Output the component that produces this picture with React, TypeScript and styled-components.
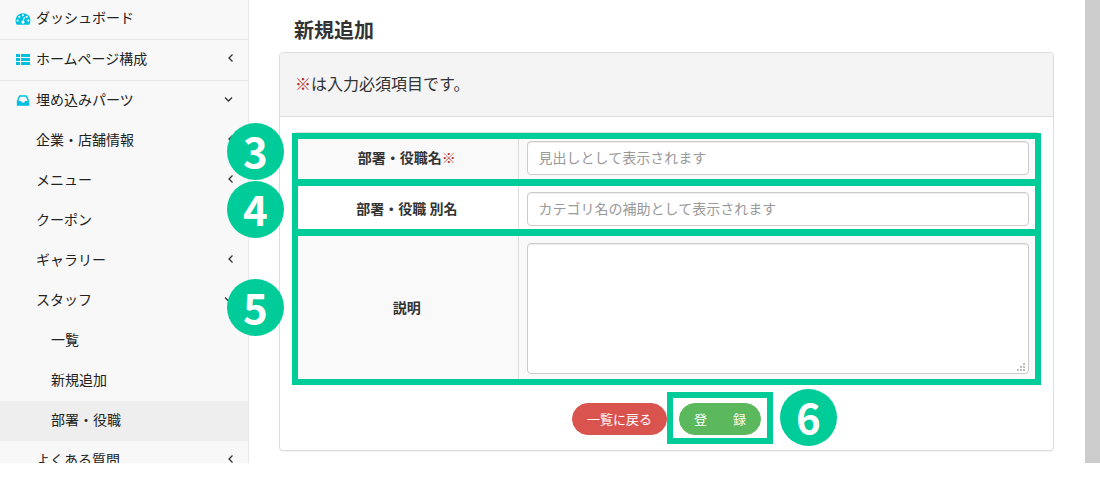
import React from "react";
import styled, { createGlobalStyle } from "styled-components";

const ACCENT = "#00cc99";
const LINE = "#dddddd";

const GlobalStyle = createGlobalStyle`
  *, *::before, *::after { box-sizing: border-box; }
  body {
    margin: 0;
    background: #fff;
    color: #333;
    font-family: "Noto Sans CJK JP", sans-serif;
    font-size: 14px;
    line-height: 20px;
  }
`;

const Shell = styled.div`
  display: flex;
  align-items: stretch;
  height: calc(100vh - 36px);
  overflow: hidden;
`;

const Sidebar = styled.nav`
  flex: 0 0 249px;
  background: #f8f8f8;
  border-right: 1px solid #e7e7e7;
`;

const NavList = styled.ul`
  list-style: none;
  margin: 0;
  padding: 0;
`;

const NavItem = styled.li<{ $divided?: boolean }>`
  border-bottom: ${(p) => (p.$divided ? "1px solid #e7e7e7" : "0")};
  &:first-child { margin-top: -1px; }
`;

const NavLink = styled.a<{ $level: number; $active?: boolean }>`
  display: flex;
  align-items: center;
  gap: 5px;
  height: 40px;
  padding: 0 14px 4px ${(p) => [15, 36, 51][p.$level]}px;
  background: ${(p) => (p.$active ? "#eeeeee" : "transparent")};
  color: #222;
  text-decoration: none;
  white-space: nowrap;
`;

const NavIcon = styled.svg`
  flex: none;
  width: 16px;
  height: 16px;
  margin-top: 4px;
  fill: #00c0e0;
`;

const Chevron = styled.svg`
  flex: none;
  width: 10px;
  height: 10px;
  margin-left: auto;
  fill: none;
  stroke: #333;
  stroke-width: 1.3;
`;

const Main = styled.main`
  position: relative;
  flex: 1;
  min-width: 0;
  padding: 20px 31px 0 30px;
`;

const Title = styled.h1`
  margin: 0 0 12px;
  padding-left: 15px;
  font-size: 20px;
  line-height: 20px;
`;

const Panel = styled.section`
  border: 1px solid ${LINE};
  border-radius: 4px;
  background: #fff;
  box-shadow: 0 1px 1px rgba(0, 0, 0, 0.05);
`;

const PanelHeader = styled.p`
  margin: 0;
  padding: 18px 15px 21px;
  border-bottom: 1px solid ${LINE};
  border-radius: 3px 3px 0 0;
  background: #f4f4f4;
  font-size: 16px;
  line-height: 24px;
`;

const Required = styled.span`
  color: #b52b27;
  font-weight: 400;
`;

const Form = styled.form`
  padding: 15px;
`;

const FieldTable = styled.table`
  width: 100%;
  margin-bottom: 20px;
  border-spacing: 0;
  table-layout: fixed;
  border: solid ${LINE};
  border-width: 0 1px 1px 0;
`;

const FieldRow = styled.tr`
  position: relative;
  &:nth-child(odd) { background: #f9f9f9; }
`;

const LabelCell = styled.th`
  width: 30%;
  padding: 6px 8px 9px;
  border: solid ${LINE};
  border-width: 1px 0 0 1px;
  font-weight: 700;
`;

const InputCell = styled.td`
  padding: 8px;
  border: solid ${LINE};
  border-width: 1px 0 0 1px;
`;

const TextBox = styled.input`
  display: block;
  width: 100%;
  height: 34px;
  padding: 5px 11px 7px;
  border: 1px solid #ccc;
  border-radius: 4px;
  background: #fff;
  box-shadow: inset 0 1px 1px rgba(0, 0, 0, 0.075);
  color: #555;
  font: inherit;
  &::placeholder { color: #999; opacity: 1; }
`;

const AreaWrap = styled.div`
  position: relative;
`;

const TextArea = styled(TextBox).attrs({ as: "textarea" })`
  height: 131px;
  resize: none;
`;

const Grip = styled.svg`
  position: absolute;
  right: 4px;
  bottom: 3px;
  width: 8px;
  height: 8px;
  fill: #bbb;
  pointer-events: none;
`;

const Highlight = styled.span<{ $top: number; $bottom: number; $left: number; $right: number }>`
  position: absolute;
  top: ${(p) => p.$top}px;
  bottom: ${(p) => p.$bottom}px;
  left: ${(p) => p.$left}px;
  right: ${(p) => p.$right}px;
  border: 6px solid ${ACCENT};
  pointer-events: none;
`;

const Badge = styled.span<{ $left: number; $top: number }>`
  position: absolute;
  z-index: 1;
  left: ${(p) => p.$left}px;
  top: ${(p) => p.$top}px;
  width: 57px;
  height: 57px;
  border-radius: 50%;
  background: ${ACCENT};
  color: #fff;
  font-size: 42px;
  font-weight: 700;
  line-height: 53px;
  text-align: center;
`;

const Actions = styled.div`
  display: flex;
  justify-content: center;
  gap: 12px;
`;

const Marked = styled.div`
  position: relative;
`;

const PillButton = styled.button<{ $tone: "danger" | "success" }>`
  display: block;
  height: 32px;
  padding: 0 14px;
  border: 1px solid ${(p) => (p.$tone === "danger" ? "#d9534f" : "#5cb85c")};
  border-radius: 16px;
  background: ${(p) => (p.$tone === "danger" ? "#d9534f" : "#5cb85c")};
  color: #fff;
  font: inherit;
  font-size: 13px;
  white-space: nowrap;
`;

const ScrollTrack = styled.div`
  flex: 0 0 15px;
  background: #ccc;
`;

type IconName = "gauge" | "list" | "inbox";

const iconBoxes: Record<IconName, string> = {
  gauge: "-64 0 1920 1920",
  list: "0 0 16 16",
  inbox: "-224 -32 1984 1984",
};

const Icon = ({ name }: { name: IconName }) => (
  <NavIcon viewBox={iconBoxes[name]} aria-hidden="true">
    {name === "gauge" && (
      <path d="M384 1152q0-53-37.500-90.500t-90.500-37.500-90.500 37.500-37.500 90.500 37.500 90.500 90.500 37.500 90.500-37.500 37.500-90.500zm192-448q0-53-37.500-90.500t-90.500-37.500-90.500 37.500-37.500 90.500 37.500 90.500 90.500 37.500 90.500-37.500 37.500-90.500zm428 481l101-382q6-26-7.500-48.500t-38.500-29.500-48 6.500-30 39.500l-101 382q-60 5-107 43.500t-63 98.500q-20 77 20 146t117 89 146-20 89-117q16-60-6-117t-72-91zm660-33q0-53-37.500-90.500t-90.500-37.500-90.500 37.500-37.500 90.500 37.500 90.500 90.500 37.500 90.500-37.500 37.500-90.500zm-640-640q0-53-37.500-90.500t-90.500-37.500-90.500 37.500-37.500 90.500 37.500 90.500 90.500 37.500 90.500-37.500 37.500-90.500zm448 192q0-53-37.500-90.500t-90.500-37.500-90.500 37.500-37.500 90.500 37.500 90.500 90.500 37.500 90.500-37.500 37.500-90.500zm320 448q0 261-141 483-19 29-54 29h-1402q-35 0-54-29-141-221-141-483 0-182 71-348t191-286 286-191 348-71 348 71 286 191 191 286 71 348z" />
    )}
    {name === "list" && (
      <path d="M1 2h4v3H1zM6 2h9v3H6zM1 6h4v3H1zM6 6h9v3H6zM1 10h4v3H1zM6 10h9v3H6z" />
    )}
    {name === "inbox" && (
      <path d="M1023 960h316q-1-3-2.500-8t-2.500-8l-212-496h-708l-212 496q-1 2-2.500 8t-2.500 8h316l95 192h320zm513 30v482q0 26-19 45t-45 19h-1408q-26 0-45-19t-19-45v-482q0-62 25-123l238-552q10-25 36.500-42t52.500-17h832q26 0 52.500 17t36.500 42l238 552q25 61 25 123z" />
    )}
  </NavIcon>
);

interface Entry {
  text: string;
  level: number;
  icon?: IconName;
  chevron?: "left" | "down";
  divided?: boolean;
  active?: boolean;
}

const entries: Entry[] = [
  { text: "ダッシュボード", level: 0, icon: "gauge", divided: true },
  { text: "ホームページ構成", level: 0, icon: "list", chevron: "left", divided: true },
  { text: "埋め込みパーツ", level: 0, icon: "inbox", chevron: "down" },
  { text: "企業・店舗情報", level: 1, chevron: "left" },
  { text: "メニュー", level: 1, chevron: "left" },
  { text: "クーポン", level: 1 },
  { text: "ギャラリー", level: 1, chevron: "left" },
  { text: "スタッフ", level: 1, chevron: "down" },
  { text: "一覧", level: 2 },
  { text: "新規追加", level: 2 },
  { text: "部署・役職", level: 2, active: true },
  { text: "よくある質問", level: 1, chevron: "left" },
];

export default function App() {
  return (
    <>
      <GlobalStyle />
      <Shell>
        <Sidebar>
          <NavList>
            {entries.map((e) => (
              <NavItem key={e.text} $divided={e.divided}>
                <NavLink
                  href="#"
                  $level={e.level}
                  $active={e.active}
                  aria-current={e.active ? "page" : undefined}
                >
                  {e.icon && <Icon name={e.icon} />}
                  {e.text}
                  {e.chevron && (
                    <Chevron viewBox="0 0 10 10" aria-hidden="true">
                      <path d={e.chevron === "left" ? "M8.500 1.500L5 5L8.500 8.500" : "M1 3.500L4.500 7L8 3.500"} />
                    </Chevron>
                  )}
                </NavLink>
              </NavItem>
            ))}
          </NavList>
        </Sidebar>
        <Main>
          <Title>新規追加</Title>
          <Panel>
            <PanelHeader>
              <Required>※</Required>は入力必須項目です。
            </PanelHeader>
            <Form onSubmit={(e) => e.preventDefault()}>
              <FieldTable>
                <tbody>
                  <FieldRow>
                    <LabelCell scope="row">
                      <label htmlFor="name">
                        部署・役職名<Required>※</Required>
                      </label>
                      <Highlight $top={1} $bottom={-2} $left={-3} $right={-4} />
                      <Badge $left={-68} $top={-9}>3</Badge>
                    </LabelCell>
                    <InputCell>
                      <TextBox id="name" type="text" placeholder="見出しとして表示されます" />
                    </InputCell>
                  </FieldRow>
                  <FieldRow>
                    <LabelCell scope="row">
                      <label htmlFor="alias">部署・役職 別名</label>
                      <Highlight $top={-3} $bottom={-1} $left={-3} $right={-4} />
                      <Badge $left={-68} $top={-2}>4</Badge>
                    </LabelCell>
                    <InputCell>
                      <TextBox id="alias" type="text" placeholder="カテゴリ名の補助として表示されます" />
                    </InputCell>
                  </FieldRow>
                  <FieldRow>
                    <LabelCell scope="row">
                      <label htmlFor="description">説明</label>
                      <Highlight $top={-4} $bottom={-3} $left={-3} $right={-4} />
                      <Badge $left={-68} $top={45}>5</Badge>
                    </LabelCell>
                    <InputCell>
                      <AreaWrap>
                        <TextArea id="description" />
                        <Grip viewBox="0 0 8 8" aria-hidden="true">
                          <path d="M6 0h2v2H6zM3 3h2v2H3zM6 3h2v2H6zM0 6h2v2H0zM3 6h2v2H3zM6 6h2v2H6z" />
                        </Grip>
                      </AreaWrap>
                    </InputCell>
                  </FieldRow>
                </tbody>
              </FieldTable>
              <Actions>
                <PillButton type="button" $tone="danger">一覧に戻る</PillButton>
                <Marked>
                  <PillButton type="submit" $tone="success">登　　録</PillButton>
                  <Highlight $top={-11} $bottom={-9} $left={-12} $right={-12} />
                  <Badge $left={101} $top={-14}>6</Badge>
                </Marked>
              </Actions>
            </Form>
          </Panel>
        </Main>
        <ScrollTrack />
      </Shell>
    </>
  );
}
